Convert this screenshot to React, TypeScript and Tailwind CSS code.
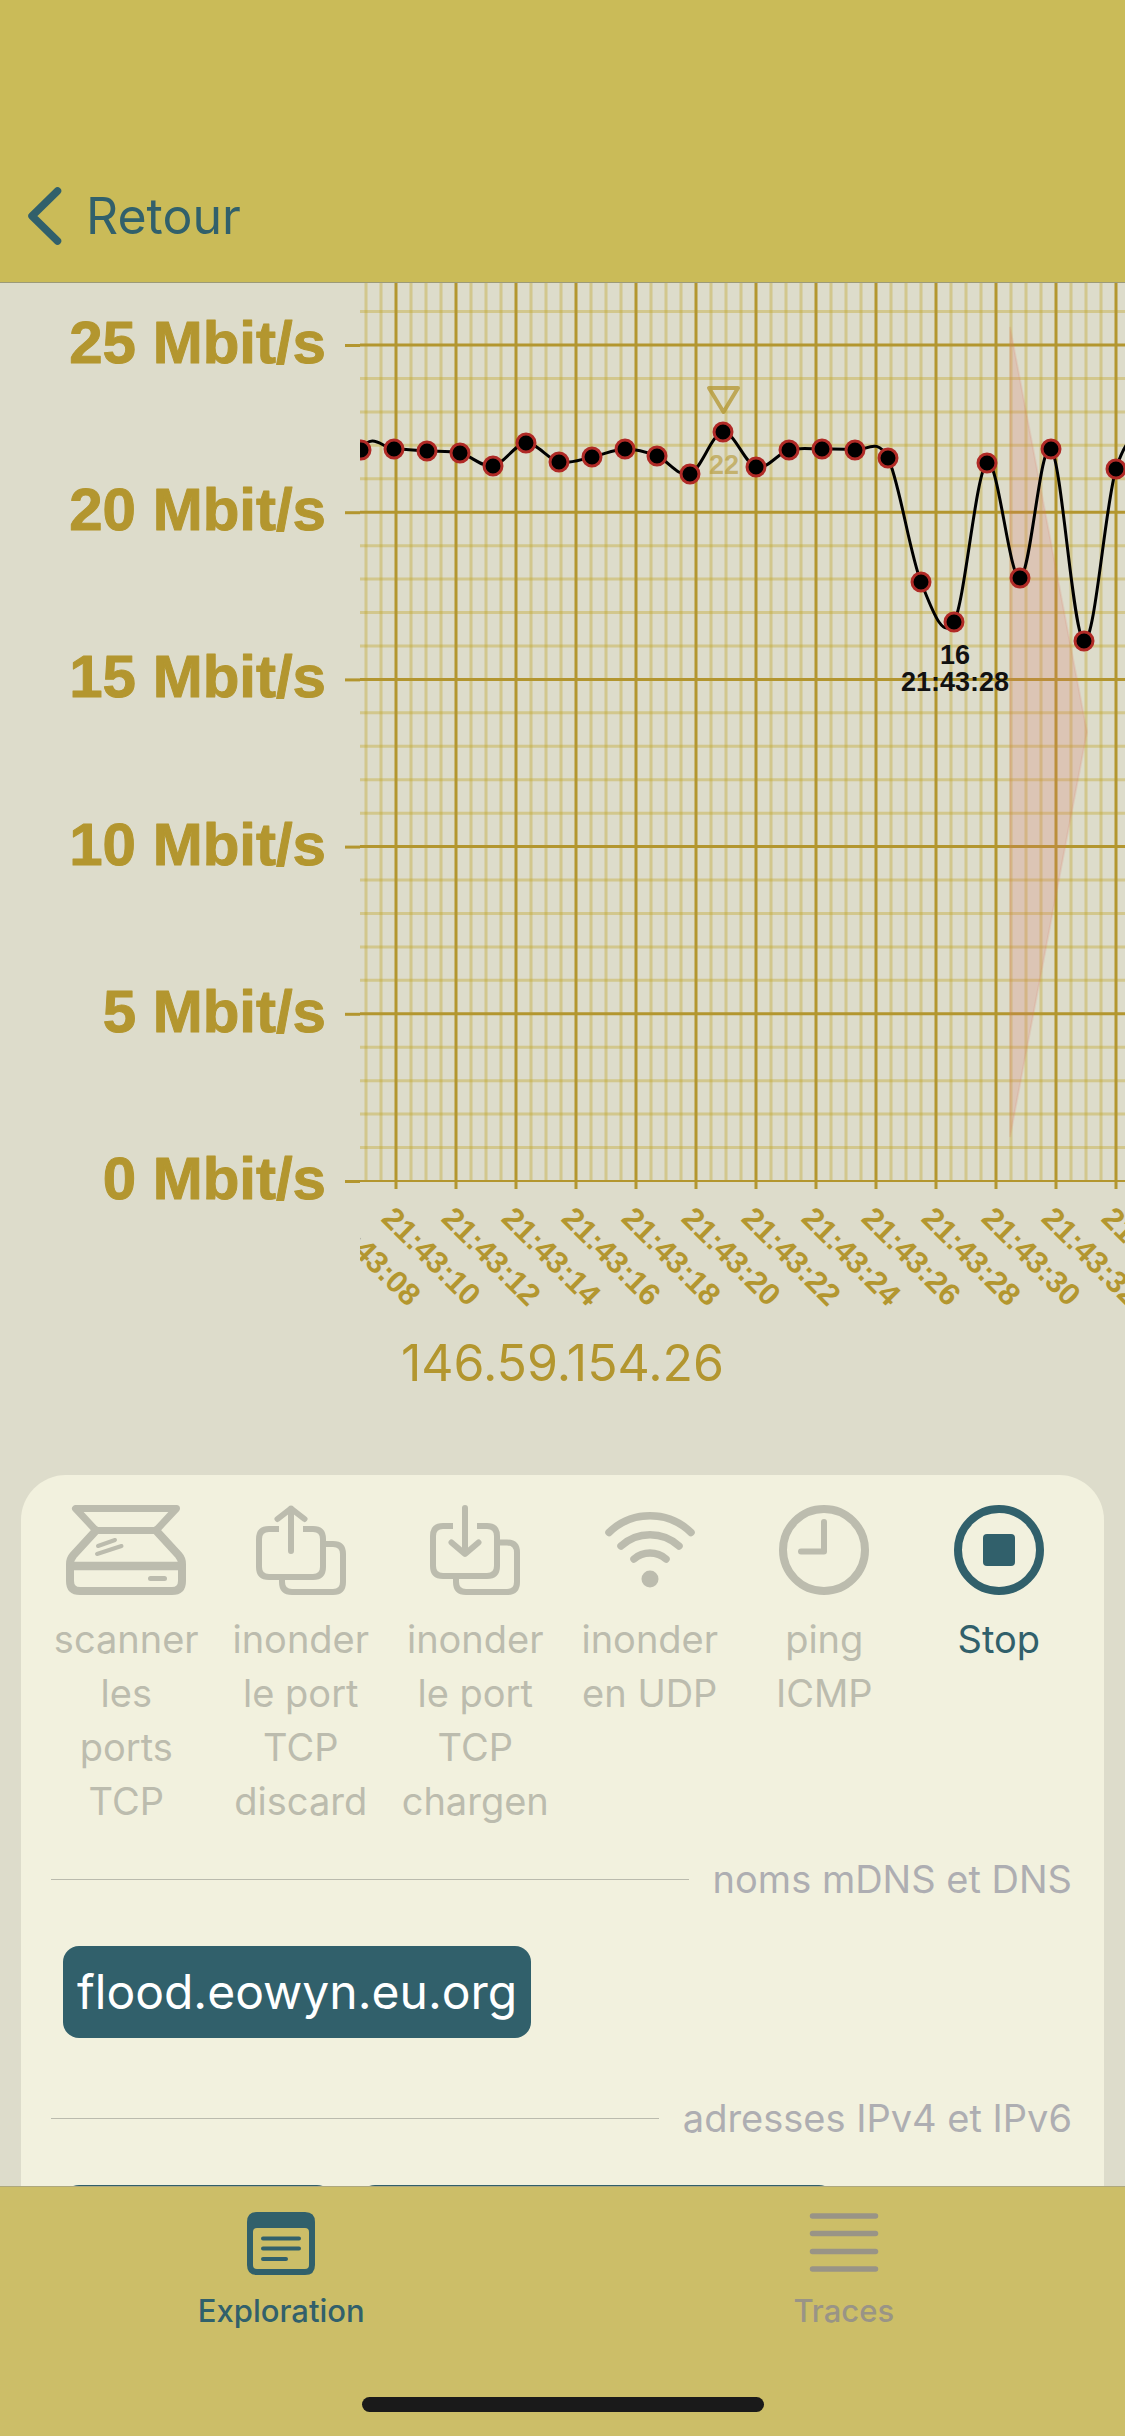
import { Fragment, type ReactNode } from "react";

const GOLD = "#b3962f";
const TOP = 345;
const BOTTOM = 1181;
const MBIT = (BOTTOM - TOP) / 25;

const yTicks = [25, 20, 15, 10, 5, 0];
const xTicks = Array.from({ length: 14 }, (_, i) => ({
  x: 336 + i * 60,
  label: `21:43:${String(8 + i * 2).padStart(2, "0")}`,
}));
const minorX = Array.from({ length: 51 }, (_, i) => 366 + i * 15).filter((x) => (x - 396) % 60 !== 0);
const minorY = Array.from({ length: 27 }, (_, i) => i).filter((v) => v % 5 !== 0);

const samples: [number, number][] = [
  [327, 565], [361, 450], [394, 449], [427, 451], [460, 453], [493, 466], [526, 443],
  [559, 462], [592, 457], [625, 449], [657, 456], [690, 474], [723, 432], [756, 467],
  [789, 450], [822, 449], [855, 450], [888, 458], [921, 582], [954, 622], [987, 463],
  [1020, 578], [1051, 449], [1084, 641], [1116, 469], [1149, 430], [1182, 450],
];

function smoothPath(p: [number, number][]) {
  let d = `M${p[1][0]} ${p[1][1]}`;
  for (let i = 1; i < p.length - 2; i++) {
    const [a, b, c, e] = [p[i - 1], p[i], p[i + 1], p[i + 2]];
    d += `C${b[0] + (c[0] - a[0]) / 6} ${b[1] + (c[1] - a[1]) / 6} ${c[0] - (e[0] - b[0]) / 6} ${c[1] - (e[1] - b[1]) / 6} ${c[0]} ${c[1]}`;
  }
  return d;
}

const yOf = (mbit: number) => BOTTOM - mbit * MBIT;

function Chart() {
  return (
    <svg viewBox="0 283 1125 1037" className="block w-full font-['Liberation_Sans',sans-serif] font-bold" role="img" aria-label="Débit en Mbit/s">
      <defs>
        <clipPath id="plot">
          <rect x="360" y="283" width="765" height="1037" />
        </clipPath>
      </defs>
      {yTicks.map((v) => (
        <Fragment key={v}>
          <text x="326" y={yOf(v) + 18} textAnchor="end" fontSize="60" fill={GOLD} stroke={GOLD} strokeWidth="1" strokeLinejoin="round">
            {v} Mbit/s
          </text>
          <path d={`M345 ${yOf(v) + 0.5}H360`} stroke={GOLD} strokeWidth="3" />
        </Fragment>
      ))}
      <g clipPath="url(#plot)">
        <g stroke="#c0a628" strokeOpacity="0.38" strokeWidth="3">
          {minorX.map((x) => <path key={x} d={`M${x} 283V${BOTTOM}`} />)}
          {minorY.map((v) => <path key={v} d={`M360 ${yOf(v)}H1125`} />)}
        </g>
        <g stroke={GOLD} strokeWidth="3">
          {xTicks.map((t) => <path key={t.x} d={`M${t.x} 283V1189`} />)}
          {yTicks.map((v) => <path key={v} d={`M360 ${yOf(v)}H1125`} strokeWidth={v === 0 ? 2 : 3} />)}
        </g>
        <path d="M1010 327L1087 732L1010 1137Z" fill="#dc7867" fillOpacity="0.22" stroke="#dc7867" strokeOpacity="0.15" strokeWidth="2" />
        {xTicks.map((t) => (
          <text key={t.x} transform={`translate(${t.x - 16} 1220) rotate(45)`} fontSize="31" fill={GOLD}>
            {t.label}
          </text>
        ))}
        <path d="M709 388H738L723.500 412Z" fill="none" stroke={GOLD} strokeOpacity="0.75" strokeWidth="4" strokeLinejoin="round" />
        <text x="724" y="474" textAnchor="middle" fontSize="27" fill={GOLD} fillOpacity="0.6">22</text>
        <path d={smoothPath(samples)} fill="none" stroke="#000" strokeWidth="3" />
        {samples.slice(1).map(([x, y]) => (
          <circle key={x} cx={x} cy={y} r="9" fill="#000" stroke="#b02a26" strokeWidth="3" />
        ))}
        <g textAnchor="middle" fontSize="27" fill="#111">
          <text x="955" y="664">16</text>
          <text x="955" y="691">21:43:28</text>
        </g>
      </g>
    </svg>
  );
}

function Icon({ width = 90, children }: { width?: number; children: ReactNode }) {
  return (
    <svg width={width} height="90" viewBox={`0 0 ${width} 90`} fill="none" stroke="currentColor" strokeWidth="6" strokeLinecap="round" strokeLinejoin="round" aria-hidden="true">
      {children}
    </svg>
  );
}

const ScannerIcon = (
  <Icon width={120}>
    <path d="M9.500 3.500H110.500L90 25.500H30Z" strokeWidth="7" />
    <path d="M30 25.500L7.500 50Q4 54 4 59V76Q4 86 14 86H106Q116 86 116 76V59Q116 54 112.500 50L90 25.500" strokeWidth="8" />
    <path d="M6 61H114" strokeWidth="8.500" />
    <path d="M84.500 73.500H98.500" strokeWidth="5" />
    <path d="M32 41L49 35M31 49L55.500 41" strokeWidth="4" />
  </Icon>
);

const UploadIcon = (
  <Icon>
    <path d="M23 24H13Q3 24 3 34V62Q3 72 13 72H57Q67 72 67 62V34Q67 24 57 24H47" strokeLinecap="butt" />
    <path d="M68 39H77Q87 39 87 49V77Q87 87 77 87H36Q26 87 26 77V73" strokeLinecap="butt" />
    <path d="M35 3.500V46M21.500 14L35 3.500L48.500 14" />
  </Icon>
);

const DownloadIcon = (
  <Icon>
    <path d="M23 21H13Q3 21 3 31V61Q3 71 13 71H57Q67 71 67 61V31Q67 21 57 21H47" strokeLinecap="butt" />
    <path d="M68 37.500H77Q87 37.500 87 47.500V77Q87 87 77 87H36Q26 87 26 77V73" strokeLinecap="butt" />
    <path d="M35 3V48.500M21.500 37.500L35 49L48.500 37.500" />
  </Icon>
);

const WifiIcon = (
  <Icon>
    <path d="M4 27.500A58.700 58.700 0 0 1 86 27.500M16 41A43 43 0 0 1 74 41M29 54A24.500 24.500 0 0 1 61 54" strokeWidth="7.500" />
    <circle cx="45" cy="74" r="8.500" fill="currentColor" stroke="none" />
  </Icon>
);

const ClockIcon = (
  <Icon>
    <circle cx="45" cy="45" r="41" strokeWidth="8" />
    <path d="M45 17V46.500H22" />
  </Icon>
);

const StopIcon = (
  <Icon>
    <circle cx="45" cy="45" r="41" strokeWidth="8" />
    <rect x="29" y="29" width="32" height="32" rx="4" fill="currentColor" stroke="none" />
  </Icon>
);

const actions = [
  { icon: ScannerIcon, lines: ["scanner", "les", "ports", "TCP"], active: false },
  { icon: UploadIcon, lines: ["inonder", "le port", "TCP", "discard"], active: false },
  { icon: DownloadIcon, lines: ["inonder", "le port", "TCP", "chargen"], active: false },
  { icon: WifiIcon, lines: ["inonder", "en UDP"], active: false },
  { icon: ClockIcon, lines: ["ping", "ICMP"], active: false },
  { icon: StopIcon, lines: ["Stop"], active: true },
];

function SectionTitle({ children }: { children: ReactNode }) {
  return (
    <div className="flex items-center gap-6">
      <div className="h-px flex-1 bg-[#bbbbae]" />
      <h2 className="text-[38px] leading-[54px] text-[#aeaeb2]">{children}</h2>
    </div>
  );
}

export default function App() {
  return (
    <div className="flex h-screen flex-col overflow-hidden bg-[#dddccb] font-['Inter',sans-serif]">
      <header className="border-b border-[#9c9a78] bg-[#cabb58] px-7 pt-[186px] pb-9">
        <button type="button" className="flex items-center gap-6 text-[50px] leading-[60px] text-[#31606b]">
          <svg width="34" height="58" viewBox="0 0 34 58" fill="none" stroke="currentColor" strokeWidth="7.500" strokeLinecap="round" strokeLinejoin="round" aria-hidden="true">
            <path d="M29.500 4L4 29L29.500 54" />
          </svg>
          Retour
        </button>
      </header>

      <main className="min-h-0 flex-1 overflow-hidden">
        <Chart />
        <p className="mt-[13px] text-center text-[50px] leading-[60px] text-[#b3962f]">146.59.154.26</p>

        <section className="mx-[21px] mt-[82px] rounded-t-[45px] bg-[#f2f1de] pt-[30px] pb-10">
          <div className="grid grid-cols-6 px-[18px]">
            {actions.map((a, i) => (
              <button
                key={i}
                type="button"
                disabled={!a.active}
                className={`flex flex-col items-center gap-[17px] text-[38px] leading-[54px] ${a.active ? "text-[#31606b]" : "text-[#bcbcae]"}`}
              >
                {a.icon}
                <span>
                  {a.lines.map((line) => (
                    <span key={line} className="block whitespace-nowrap">{line}</span>
                  ))}
                </span>
              </button>
            ))}
          </div>

          <div className="mt-6 pr-8 pl-[30px]">
            <SectionTitle>noms mDNS et DNS</SectionTitle>
            <div className="mt-10 mb-[53px] flex px-3">
              <button type="button" className="rounded-2xl bg-[#31606b] px-3.5 py-4 text-[48px] leading-[60px] text-white">
                flood.eowyn.eu.org
              </button>
            </div>
            <SectionTitle>adresses IPv4 et IPv6</SectionTitle>
            <div className="mt-10 flex gap-[26px] px-3">
              <button type="button" aria-label="adresse IPv4" className="h-[92px] w-[270px] rounded-2xl bg-[#31606b]" />
              <button type="button" aria-label="adresse IPv6" className="h-[92px] w-[476px] rounded-2xl bg-[#31606b]" />
            </div>
          </div>
        </section>
      </main>

      <footer className="border-t border-[#aea87d] bg-[#ccbe68] pt-[25px] pb-6">
        <nav className="grid grid-cols-2 text-[31px] leading-9 font-medium">
          <button type="button" aria-current="page" className="flex flex-col items-center gap-[18px] text-[#31606b]">
            <svg width="68" height="63" viewBox="0 0 68 63" aria-hidden="true">
              <path fill="currentColor" fillRule="evenodd" d="M10 0H58Q68 0 68 10V53Q68 63 58 63H10Q0 63 0 53V10Q0 0 10 0ZM10 16Q6 16 6 20V53Q6 57 10 57H58Q62 57 62 53V20Q62 16 58 16Z" />
              <path d="M16 26.500H52M16 36.500H52M16 47H39" stroke="currentColor" strokeWidth="4" strokeLinecap="round" />
            </svg>
            Exploration
          </button>
          <button type="button" className="flex flex-col items-center gap-[18px] text-[#999486]">
            <svg width="70" height="63" viewBox="0 0 70 63" fill="none" stroke="currentColor" strokeWidth="5.500" strokeLinecap="round" aria-hidden="true">
              <path d="M3.500 4H66.500M3.500 21.500H66.500M3.500 39.500H66.500M3.500 57H66.500" />
            </svg>
            Traces
          </button>
        </nav>
        <div className="mx-auto mt-[68px] h-[15px] w-[402px] rounded-full bg-[#1a1a1a]" />
      </footer>
    </div>
  );
}
